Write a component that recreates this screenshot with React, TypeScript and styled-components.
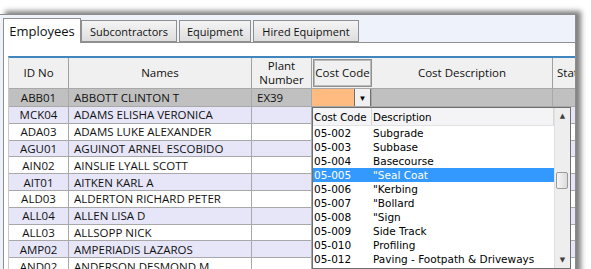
import React from "react";
import styled, { createGlobalStyle } from "styled-components";

const GlobalStyle = createGlobalStyle`
  html, body {
    margin: 0;
    padding: 0;
    background: #ffffff;
    overflow: hidden;
  }
  body {
    font-family: "Open Sans", "Noto Sans", sans-serif;
  }
`;

const Page = styled.div`
  width: 591px;
  height: 269px;
  padding-top: 14px;
  box-sizing: border-box;
  overflow: hidden;
`;

const Window = styled.div`
  width: 576px;
  height: 270px;
  background: #eef3fb;
  border-top: 1px solid #8c8c8c;
  border-right: 1px solid #8c8c8c;
  box-sizing: border-box;
  box-shadow: 5px -3px 5px rgba(0, 0, 0, 0.5);
  display: flex;
  flex-direction: column;
`;

const TabStrip = styled.div`
  height: 27px;
  display: flex;
  align-items: flex-end;
  padding-left: 3px;
  gap: 2px;
  flex-shrink: 0;
`;

const Tab = styled.div<{ $active?: boolean; $w: number }>`
  width: ${(p) => p.$w}px;
  height: ${(p) => (p.$active ? 25 : 22)}px;
  box-sizing: border-box;
  border: 1px solid #8f8f8f;
  border-bottom: ${(p) => (p.$active ? "none" : "1px solid #8f8f8f")};
  background: ${(p) =>
    p.$active ? "#ffffff" : "linear-gradient(#f4f4f4, #dedede)"};
  font-size: ${(p) => (p.$active ? 13 : 11)}px;
  color: #111;
  display: flex;
  align-items: center;
  justify-content: center;
  margin-bottom: ${(p) => (p.$active ? -1 : 0)}px;
  position: relative;
  z-index: ${(p) => (p.$active ? 2 : 1)};
  margin-right: ${(p) => (p.$active ? -2 : 0)}px;
`;

const Panel = styled.div`
  flex: 1;
  background: #ffffff;
  border-top: 1px solid #8f8f8f;
  border-left: 1px solid #8f8f8f;
  margin-left: 3px;
  padding: 13px 0 0 4px;
  position: relative;
  overflow: hidden;
`;

const Grid = styled.div`
  position: relative;
  border-top: 2px solid #3f86bf;
  border-left: 1px solid #c8c8c8;
`;

const Row = styled.div<{ $bg?: string; $h: number }>`
  display: grid;
  grid-template-columns: 60px 183px 60px 60px 181px 40px;
  height: ${(p) => p.$h}px;
  background: ${(p) => p.$bg || "#ffffff"};
  border-bottom: 1px solid #a8a8a8;
  box-sizing: border-box;
`;

const HeadCell = styled.div<{ $focus?: boolean; $left?: boolean }>`
  background: #f0f0f0;
  border-right: 1px solid #a0a0a0;
  font-size: 11.5px;
  line-height: 14px;
  color: #111;
  display: flex;
  align-items: center;
  justify-content: ${(p) => (p.$left ? "flex-start" : "center")};
  padding-left: ${(p) => (p.$left ? 4 : 0)}px;
  text-align: center;
  box-sizing: border-box;
  white-space: nowrap;
  overflow: hidden;
  ${(p) =>
    p.$focus &&
    `
    box-shadow: inset 1px 1px 0 #bcbcbc, inset -1px -1px 0 #bcbcbc;
    border: 1px solid #909090;
    margin: 1px 0 1px 1px;
  `}
`;

const Cell = styled.div<{ $center?: boolean }>`
  border-right: 1px solid #a8a8a8;
  font-size: 11.5px;
  color: #111;
  display: flex;
  align-items: center;
  justify-content: ${(p) => (p.$center ? "center" : "flex-start")};
  padding-left: ${(p) => (p.$center ? 0 : 5)}px;
  white-space: nowrap;
  overflow: hidden;
  box-sizing: border-box;
`;

const EditCell = styled.div`
  background: #ffbb80;
  border-right: 1px solid #a8a8a8;
  display: flex;
  justify-content: flex-end;
  box-sizing: border-box;
`;

const DropButton = styled.div`
  width: 15px;
  background: #f0f0f0;
  border-left: 1px solid #707070;
  border-right: 1px solid #707070;
  display: flex;
  align-items: center;
  justify-content: center;
  font-size: 8px;
  color: #000;
`;

const Dropdown = styled.div`
  position: absolute;
  left: 303px;
  top: 49px;
  width: 259px;
  height: 162px;
  background: #ffffff;
  border: 1px solid #6f6f6f;
  box-sizing: border-box;
  display: flex;
  z-index: 5;
  font-family: "DejaVu Sans", sans-serif;
`;

const List = styled.div`
  flex: 1;
  display: flex;
  flex-direction: column;
`;

const ListHead = styled.div`
  display: grid;
  grid-template-columns: 59px 1fr;
  height: 18px;
  background: #f4f4f6;
  font-size: 10.3px;
  color: #000;
`;

const ListHeadCell = styled.div`
  display: flex;
  align-items: center;
  padding-left: 1px;
  white-space: nowrap;
  overflow: hidden;
  border-right: 1px solid #d8d8d8;
  border-bottom: 1px solid #e2e2e2;
`;

const Item = styled.div<{ $sel?: boolean }>`
  display: grid;
  grid-template-columns: 59px 1fr;
  height: 14px;
  background: ${(p) => (p.$sel ? "#3399ff" : "transparent")};
  color: ${(p) => (p.$sel ? "#ffffff" : "#000")};
  font-size: 10.5px;
  line-height: 14px;
  white-space: nowrap;
  > span {
    padding-left: 1px;
    overflow: hidden;
  }
`;

const ScrollBar = styled.div`
  width: 15px;
  background: #eeeeee;
  border-left: 1px solid #e0e0e0;
  display: flex;
  flex-direction: column;
  align-items: center;
  justify-content: space-between;
  position: relative;
`;

const Arrow = styled.div`
  height: 16px;
  display: flex;
  align-items: center;
  font-size: 7px;
  color: #404040;
`;

const Thumb = styled.div`
  position: absolute;
  left: 1px;
  top: 64px;
  width: 12px;
  height: 17px;
  border: 1px solid #9a9a9a;
  border-radius: 2px;
  background: linear-gradient(90deg, #f6f6f6, #dcdcdc);
  box-sizing: border-box;
`;

const employees: [string, string][] = [
  ["MCK04", "ADAMS ELISHA VERONICA"],
  ["ADA03", "ADAMS LUKE ALEXANDER"],
  ["AGU01", "AGUINOT ARNEL ESCOBIDO"],
  ["AIN02", "AINSLIE LYALL SCOTT"],
  ["AIT01", "AITKEN KARL A"],
  ["ALD03", "ALDERTON RICHARD PETER"],
  ["ALL04", "ALLEN LISA D"],
  ["ALL03", "ALLSOPP NICK"],
  ["AMP02", "AMPERIADIS LAZAROS"],
  ["AND02", "ANDERSON DESMOND M"],
];

const codes: [string, string][] = [
  ["05-002", "Subgrade"],
  ["05-003", "Subbase"],
  ["05-004", "Basecourse"],
  ["05-005", "\"Seal Coat"],
  ["05-006", "\"Kerbing"],
  ["05-007", "\"Bollard"],
  ["05-008", "\"Sign"],
  ["05-009", "Side Track"],
  ["05-010", "Profiling"],
  ["05-012", "Paving - Footpath & Driveways"],
];

export default function App() {
  return (
    <>
      <GlobalStyle />
      <Page>
        <Window>
          <TabStrip>
            <Tab $active $w={78}>Employees</Tab>
            <Tab $w={96}>Subcontractors</Tab>
            <Tab $w={72}>Equipment</Tab>
            <Tab $w={106}>Hired Equipment</Tab>
          </TabStrip>
          <Panel>
            <Grid>
              <Row $h={31} $bg="#f0f0f0">
                <HeadCell>ID No</HeadCell>
                <HeadCell>Names</HeadCell>
                <HeadCell>
                  Plant
                  <br />
                  Number
                </HeadCell>
                <HeadCell $focus>Cost Code</HeadCell>
                <HeadCell>Cost Description</HeadCell>
                <HeadCell $left>Status</HeadCell>
              </Row>
              <Row $h={18} $bg="#c0c0c0">
                <Cell $center>ABB01</Cell>
                <Cell>ABBOTT CLINTON T</Cell>
                <Cell>EX39</Cell>
                <EditCell>
                  <DropButton>▼</DropButton>
                </EditCell>
                <Cell />
                <Cell />
              </Row>
              {employees.map(([id, name], i) => (
                <Row key={id} $h={16.8} $bg={i % 2 === 0 ? "#e6e6f8" : "#ffffff"}>
                  <Cell $center>{id}</Cell>
                  <Cell>{name}</Cell>
                  <Cell />
                  <Cell />
                  <Cell />
                  <Cell />
                </Row>
              ))}
              <Dropdown>
                <List>
                  <ListHead>
                    <ListHeadCell>Cost Code</ListHeadCell>
                    <ListHeadCell>Description</ListHeadCell>
                  </ListHead>
                  {codes.map(([c, d]) => (
                    <Item key={c} $sel={c === "05-005"}>
                      <span>{c}</span>
                      <span>{d}</span>
                    </Item>
                  ))}
                </List>
                <ScrollBar>
                  <Arrow>▲</Arrow>
                  <Thumb />
                  <Arrow>▼</Arrow>
                </ScrollBar>
              </Dropdown>
            </Grid>
          </Panel>
        </Window>
      </Page>
    </>
  );
}
